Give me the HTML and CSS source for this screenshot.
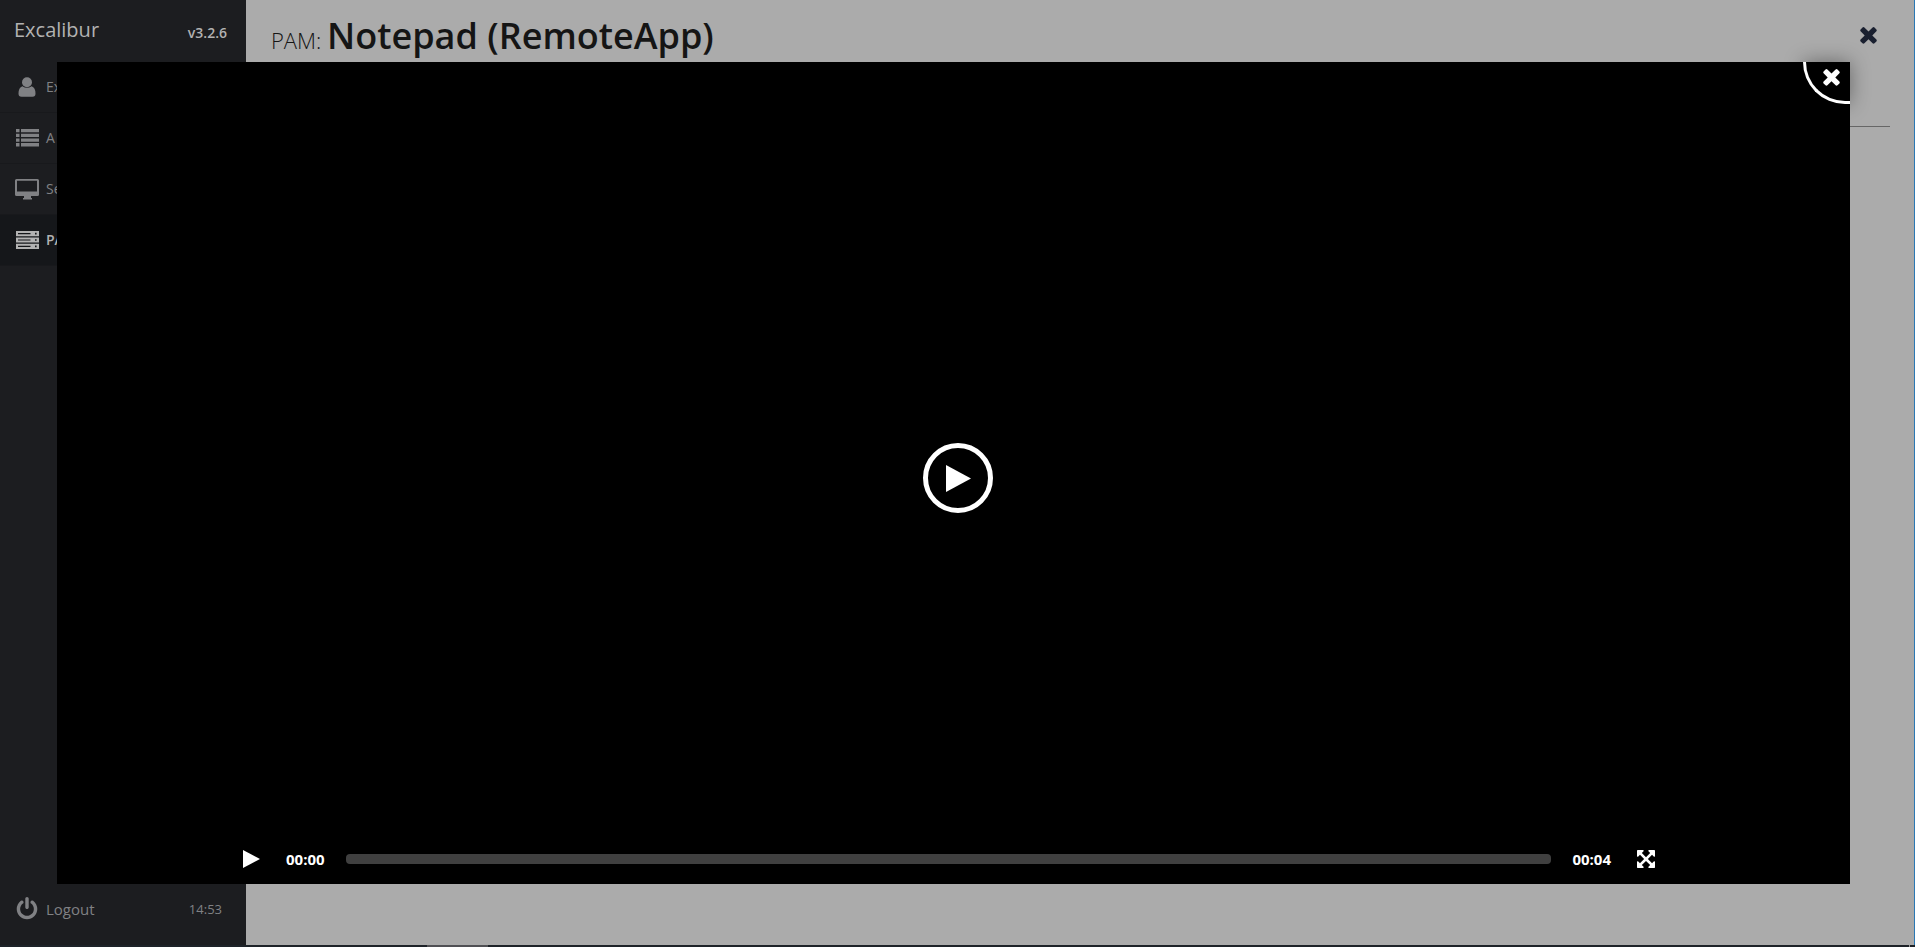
FILE: index.html
```html
<!DOCTYPE html>
<html lang="en">
<head>
<meta charset="utf-8">
<title>Excalibur</title>
<link rel="stylesheet" href="styles.css">
</head>
<body>
<div class="app">
  <aside class="sidebar">
    <header class="brand">
      <span class="brand-name">Excalibur</span>
      <span class="brand-version">v3.2.6</span>
    </header>
    <nav class="menu">
      <a class="menu-item" href="#">
        <svg class="menu-icon" viewBox="0 0 26 24"><circle cx="13" cy="7.300" r="5"/><path d="M8.400 11.200Q13 14.500 17.600 11.200Q21.500 12.500 21.500 18.500Q21.500 21.800 18.500 21.800H7.500Q4.500 21.800 4.500 18.500Q4.500 12.500 8.400 11.200Z"/></svg>
        <span class="menu-label">Ex</span>
      </a>
      <a class="menu-item" href="#">
        <svg class="menu-icon" viewBox="0 0 26 24"><path d="M2 3h3.500v3.300H2zM7 3h18v3.300H7zM2 7.700h3.500v3.300H2zM7 7.700h18v3.300H7zM2 12.400h3.500v3.300H2zM7 12.400h18v3.300H7zM2 17.100h3.500v3.300H2zM7 17.100h18v3.300H7z"/></svg>
        <span class="menu-label">A</span>
      </a>
      <a class="menu-item" href="#">
        <svg class="menu-icon" viewBox="0 0 26 24"><path fill-rule="evenodd" d="M2.500 2h21Q25 2 25 3.500v14Q25 19 23.500 19H17v2h1v1.500H9V21h1v-2H2.500Q1 19 1 17.500v-14Q1 2 2.500 2ZM3 3.700V14.500h20V3.700Z"/></svg>
        <span class="menu-label">Se</span>
      </a>
      <a class="menu-item menu-item-active" href="#">
        <svg class="menu-icon" viewBox="0 0 26 24"><path fill-rule="evenodd" d="M2 3h23v5.200H2zM4 5v1.200H16.500V5zM21 4.800v1.600h1.600V4.800zM2 9.400h23v5.200H2zM4 11.400v1.200H16.500v-1.200zM21 11.200v1.600h1.600v-1.600zM2 15.800h23V21H2zM4 17.800V19H16.500v-1.200zM21 17.600v1.600h1.600v-1.600z"/></svg>
        <span class="menu-label">PA</span>
      </a>
    </nav>
    <footer class="session">
      <a class="logout" href="#">
        <svg class="menu-icon" viewBox="0 0 1792 1792"><path d="M1664 896q0 156-61 298t-164 245-245 164-298 61-298-61-245-164-164-245-61-298q0-182 80.500-343t226.500-270q43-32 95.500-25t83.500 50q32 42 24.500 94.500t-49.500 84.500q-98 74-151.500 181t-53.500 228q0 104 40.500 198.500t109.500 163.500 163.500 109.500 198.500 40.500 198.500-40.500 163.500-109.500 109.500-163.500 40.500-198.500q0-121-53.500-228t-151.500-181q-42-32-49.500-84.500t24.500-94.500q31-43 84-50t95 25q146 109 226.500 270t80.500 343zm-640-768v640q0 52-38 90t-90 38-90-38-38-90v-640q0-52 38-90t90-38 90 38 38 90z"/></svg>
        <span>Logout</span>
      </a>
      <time class="clock">14:53</time>
    </footer>
  </aside>
  <main class="page">
    <header class="page-header">
      <h1 class="page-title"><span class="page-kind">PAM: </span>Notepad (RemoteApp)</h1>
      <button class="page-close" type="button" aria-label="Close page">
        <svg class="close-icon" viewBox="0 0 1792 1792"><path d="M1490 1322q0 40-28 68l-136 136q-28 28-68 28t-68-28l-294-294-294 294q-28 28-68 28t-68-28l-136-136q-28-28-28-68t28-68l294-294-294-294q-28-28-28-68t28-68l136-136q28-28 68-28t68 28l294 294 294-294q28-28 68-28t68 28l136 136q28 28 28 68t-28 68l-294 294 294 294q28 28 28 68z"/></svg>
      </button>
    </header>
  </main>
</div>
<div class="taskbar"><span class="taskbar-active"></span><span class="taskbar-tick"></span></div>

<section class="player" role="dialog" aria-label="Session recording">
  <button class="player-close" type="button" aria-label="Close player">
    <svg class="close-icon" viewBox="0 0 1792 1792"><path d="M1490 1322q0 40-28 68l-136 136q-28 28-68 28t-68-28l-294-294-294 294q-28 28-68 28t-68-28l-136-136q-28-28-28-68t28-68l294-294-294-294q-28-28-28-68t28-68l136-136q28-28 68-28t68 28l294 294 294-294q28-28 68-28t68 28l136 136q28 28 28 68t-28 68l-294 294 294 294q28 28 28 68z"/></svg>
  </button>
  <div class="screen">
    <button class="big-play" type="button" aria-label="Play recording">
      <svg class="big-play-icon" viewBox="0 0 25 27"><path d="M0 0L25 13.500L0 27Z"/></svg>
    </button>
    <div class="controls">
      <button class="control" type="button" aria-label="Play"><svg class="play-icon" viewBox="0 0 17 18"><path d="M0 0L17 9L0 18Z"/></svg></button>
      <span class="time">00:00</span>
      <div class="track" role="progressbar" aria-label="Playback position" aria-valuenow="0" aria-valuemin="0" aria-valuemax="4"></div>
      <span class="time">00:04</span>
      <button class="control" type="button" aria-label="Full screen"><svg class="expand-icon" viewBox="128 128 1536 1536"><path d="M1411 541l-355 355 355 355 144-144q29-31 70-14 39 17 39 59v448q0 26-19 45t-45 19h-448q-42 0-59-40-17-39 14-69l144-144-355-355-355 355 144 144q31 30 14 69-17 40-59 40h-448q-26 0-45-19t-19-45v-448q0-42 40-59 39-17 69 14l144 144 355-355-355-355-144 144q-19 19-45 19-12 0-24-5-40-17-40-59v-448q0-26 19-45t45-19h448q42 0 59 40 17 39-14 69l-144 144 355 355 355-355-144-144q-31-30-14-69 17-40 59-40h448q26 0 45 19t19 45v448q0 42-39 59-13 5-25 5-26 0-45-19z"/></svg></button>
    </div>
  </div>
</section>
</body>
</html>
```
FILE: styles.css
```css
* {
  box-sizing: border-box;
}

body {
  margin: 0;
  height: 100vh;
  display: flex;
  flex-direction: column;
  overflow: hidden;
  background: #ababab;
  color: #151515;
  font-family: "Open Sans", "Noto Sans", sans-serif;
  font-size: 14px;
}

button {
  padding: 0;
  border: 0;
  background: none;
  color: inherit;
  cursor: pointer;
}

svg {
  display: block;
  fill: currentColor;
}

.app {
  flex: 1;
  display: flex;
  min-height: 0;
}

.sidebar {
  width: 246px;
  display: flex;
  flex-direction: column;
  background: #1c1d20;
  color: #808184;
}

.brand {
  height: 62px;
  padding: 0 19px 4px 14px;
  display: flex;
  align-items: center;
  justify-content: space-between;
  color: #b2b2b2;
}

.brand-name {
  font-size: 20px;
}

.brand-version {
  padding-top: 6px;
  font-size: 14px;
  font-weight: 600;
}

.menu {
  flex: 1;
}

.menu-item {
  height: 51px;
  padding-left: 14px;
  display: flex;
  align-items: center;
  gap: 6px;
  border-bottom: 1px solid #18191c;
  color: inherit;
  text-decoration: none;
}

.menu-label {
  padding-bottom: 2px;
}

.menu-item-active {
  background: #15171a;
  color: #b2b2b2;
  font-weight: 600;
}

.menu-icon {
  width: 26px;
  height: 24px;
}

.session {
  height: 72px;
  padding: 0 24px 0 14px;
  display: flex;
  align-items: center;
  justify-content: space-between;
}

.logout {
  display: flex;
  align-items: center;
  gap: 6px;
  color: inherit;
  font-size: 15px;
  text-decoration: none;
}

.clock {
  font-size: 13px;
}

.page {
  flex: 1;
  padding: 0 24px 0 25px;
  border-right: 1px solid #2b78b4;
}

.page-header {
  height: 127px;
  padding-top: 10px;
  display: flex;
  align-items: flex-start;
  justify-content: space-between;
  border-bottom: 1px solid #666;
}

.page-title {
  margin: 0;
  font-size: 36px;
  font-weight: 600;
  line-height: 52px;
}

.page-kind {
  font-size: 22px;
  font-weight: 300;
}

.page-close {
  padding: 12px 9px;
  color: #1a2030;
}

.close-icon {
  width: 25px;
  height: 25px;
}

.taskbar {
  height: 2px;
  padding: 0 5px 0 427px;
  display: flex;
  justify-content: space-between;
  background: #1d2228;
}

.taskbar-active {
  width: 61px;
  background: #505054;
}

.taskbar-tick {
  width: 1px;
  background: #999;
}

.player {
  position: fixed;
  inset: 62px 65px 63px 57px;
  color: #fff;
}

.screen {
  position: relative;
  height: 100%;
  display: flex;
  flex-direction: column;
  justify-content: flex-end;
  align-items: center;
  background: #000;
}

.player-close {
  position: absolute;
  top: 0;
  right: 0;
  z-index: 1;
  width: 47px;
  height: 42px;
  padding: 2px 0 0 13px;
  display: flex;
  border: solid #fff;
  border-width: 0 0 3px 3px;
  border-bottom-left-radius: 42px;
  background: #000;
  box-shadow: 0 0 20px rgba(0, 0, 0, 0.4);
}

.big-play {
  position: absolute;
  top: 50%;
  left: 50%;
  width: 70px;
  height: 70px;
  margin: -30px -31px;
  padding-left: 2px;
  display: grid;
  place-items: center;
  border: 5px solid #fff;
  border-radius: 50%;
}

.big-play-icon {
  width: 25px;
  height: 27px;
}

.controls {
  width: 80%;
  height: 50px;
  padding: 0 12px 0 7px;
  display: flex;
  align-items: center;
  gap: 20px;
}

.play-icon {
  width: 17px;
  height: 18px;
}

.expand-icon {
  width: 18px;
  height: 18px;
}

.control {
  padding: 0 4px;
}

.control:first-child {
  padding-left: 0;
}

.time {
  width: 42px;
  padding-bottom: 1px;
  font-size: 15px;
  font-weight: 700;
  text-align: center;
}

.track {
  flex: 1;
  height: 10px;
  border-radius: 4px;
  background: #404040;
}
```
